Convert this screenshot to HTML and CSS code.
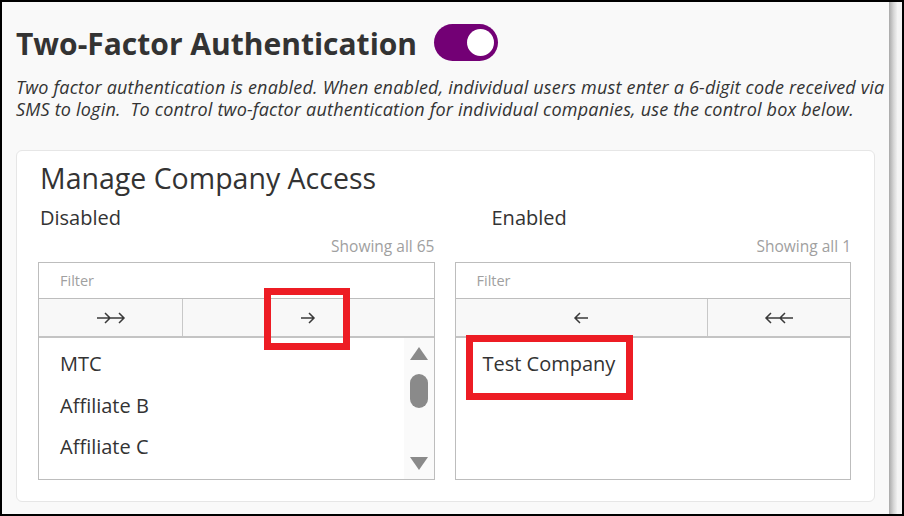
FILE: index.html
```html
<!DOCTYPE html>
<html lang="en">
<head>
  <meta charset="UTF-8">
  <meta name="viewport" content="width=device-width, initial-scale=1.0">
  <title>Two-Factor Authentication</title>
  <link rel="stylesheet" href="styles.css">
</head>
<body>
  <div class="frame">
    <main class="page">
      <div class="title-row">
        <h1>Two-Factor Authentication</h1>
        <span class="toggle on"><span class="knob"></span></span>
      </div>
      <p class="intro">
        Two factor authentication is enabled. When enabled, individual users must enter a 6-digit code received via<br>
        SMS to login.&nbsp; To control two-factor authentication for individual companies, use the control box below.
      </p>

      <section class="card">
        <h2>Manage Company Access</h2>
        <div class="dual">
          <div class="pane">
            <h3>Disabled</h3>
            <div class="count">Showing all 65</div>
            <div class="listbox">
              <input class="filter" type="text" placeholder="Filter">
              <div class="moves">
                <button class="move narrow" title="Move all">
                  <svg width="30" height="12" viewBox="0 0 30 12"><path d="M1 6H28M9 1l5 5-5 5M23 1l5 5-5 5" fill="none" stroke="#3a3a3a" stroke-width="1.5"/></svg>
                </button>
                <button class="move wide" title="Move selected">
                  <svg width="16" height="12" viewBox="0 0 16 12"><path d="M1 6H14M9 1l5 5-5 5" fill="none" stroke="#3a3a3a" stroke-width="1.5"/></svg>
                </button>
              </div>
              <div class="items">
                <ul>
                  <li>MTC</li>
                  <li>Affiliate B</li>
                  <li>Affiliate C</li>
                </ul>
                <div class="scrollbar">
                  <span class="tri up"></span>
                  <span class="thumb"></span>
                  <span class="tri down"></span>
                </div>
              </div>
            </div>
          </div>

          <div class="pane">
            <h3 class="right">Enabled</h3>
            <div class="count">Showing all 1</div>
            <div class="listbox">
              <input class="filter" type="text" placeholder="Filter">
              <div class="moves">
                <button class="move wide-r" title="Remove selected">
                  <svg width="16" height="12" viewBox="0 0 16 12"><path d="M15 6H2M7 1L2 6l5 5" fill="none" stroke="#3a3a3a" stroke-width="1.5"/></svg>
                </button>
                <button class="move narrow-r" title="Remove all">
                  <svg width="30" height="12" viewBox="0 0 30 12"><path d="M29 6H2M7 1L2 6l5 5M21 1l-5 5 5 5" fill="none" stroke="#3a3a3a" stroke-width="1.5"/></svg>
                </button>
              </div>
              <div class="items">
                <ul class="chosen">
                  <li>Test Company</li>
                </ul>
              </div>
            </div>
          </div>
        </div>
      </section>
    </main>
    <div class="edge"></div>

    <span class="mark mark-move"></span>
    <span class="mark mark-item"></span>
  </div>
</body>
</html>
```

FILE: styles.css
```css
* {
  box-sizing: border-box;
}

body {
  margin: 0;
  font-family: "Open Sans", "Noto Sans", sans-serif;
  color: #333;
  background-color: #fff;
}

.frame {
  position: relative;
  width: 904px;
  height: 516px;
  border: 2px solid #000;
  display: flex;
  background-color: #f4f4f4;
  overflow: hidden;
}

.page {
  width: 887px;
  background-color: #f9f9f9;
  padding: 20px 0 0 14px;
}

.edge {
  width: 8px;
  background: linear-gradient(to right, #a9a9a9, #d8d8d8 60%, #efefef);
}

.title-row {
  display: flex;
  align-items: center;
  gap: 17px;
}

h1 {
  margin: 0;
  font-size: 30px;
  font-weight: 700;
  line-height: 44px;
  color: #333;
}

.toggle {
  width: 64px;
  height: 37px;
  border-radius: 19px;
  background-color: #730075;
  display: flex;
  align-items: center;
  justify-content: flex-end;
  padding-right: 4px;
  margin-top: -3px;
}

.toggle .knob {
  width: 27px;
  height: 27px;
  border-radius: 50%;
  background-color: #fff;
}

.intro {
  margin: 10px 0 0;
  font-size: 18px;
  font-style: italic;
  line-height: 22px;
  letter-spacing: 0.2px;
  color: #333;
  white-space: nowrap;
}

.card {
  margin-top: 30px;
  width: 859px;
  height: 352px;
  background-color: #fff;
  border: 1px solid #e6e6e6;
  border-radius: 6px;
  padding: 10px 23px 0 21px;
}

h2 {
  margin: 0 0 0 2px;
  font-size: 28.5px;
  font-weight: 400;
  line-height: 34px;
  color: #333;
}

.dual {
  display: flex;
  gap: 20px;
}

.pane {
  flex: 1;
}

h3 {
  margin: 9px 0 0 2px;
  font-size: 20px;
  font-weight: 400;
  line-height: 28px;
  color: #333;
}

h3.right {
  margin-left: 37px;
}

.count {
  text-align: right;
  font-size: 15.5px;
  color: #a0a0a0;
  line-height: 18px;
  margin: 5px 0 7px;
}

.listbox {
  border: 1px solid #bdbdbd;
  height: 218px;
  background-color: #fff;
  display: flex;
  flex-direction: column;
}

.filter {
  height: 36px;
  flex: none;
  border: none;
  border-bottom: 1px solid #bdbdbd;
  padding: 0 21px;
  font-family: inherit;
  font-size: 14.5px;
  color: #333;
  outline: none;
}

.filter::placeholder {
  color: #a0a0a0;
}

.moves {
  display: flex;
  flex: none;
  height: 39px;
  border-bottom: 2px solid #c4c4c4;
}

.move {
  background-color: #f8f8f8;
  border: none;
  padding: 0;
  display: flex;
  align-items: center;
  justify-content: center;
  cursor: pointer;
}

.move + .move {
  border-left: 1px solid #c8c8c8;
}

.move.narrow {
  width: 143px;
}

.move.wide {
  flex: 1;
}

.move.wide-r {
  width: 251px;
}

.move.narrow-r {
  flex: 1;
}

.items {
  flex: 1;
  display: flex;
}

.items ul {
  flex: 1;
  list-style: none;
  margin: 0;
  padding: 5px 0 0 21px;
}

.items ul.chosen {
  padding-left: 27px;
}

.items li {
  font-size: 20px;
  line-height: 41.5px;
  color: #333;
}

.scrollbar {
  width: 30px;
  background-color: #fafafa;
  display: flex;
  flex-direction: column;
  align-items: center;
  padding: 9px 0 9px;
}

.tri {
  width: 0;
  height: 0;
  border-left: 9px solid transparent;
  border-right: 9px solid transparent;
}

.tri.up {
  border-bottom: 13px solid #8a8a8a;
}

.tri.down {
  border-top: 13px solid #8a8a8a;
  margin-top: auto;
}

.thumb {
  width: 18px;
  height: 34px;
  border-radius: 9px;
  background-color: #8a8a8a;
  margin-top: 14px;
}

/* red annotation boxes drawn over the screenshot */
.mark {
  position: absolute;
  border: 7px solid #ed1c24;
}

.mark-move {
  left: 262px;
  top: 286px;
  width: 86px;
  height: 62px;
}

.mark-item {
  left: 464px;
  top: 333px;
  width: 167px;
  height: 65px;
}
```
